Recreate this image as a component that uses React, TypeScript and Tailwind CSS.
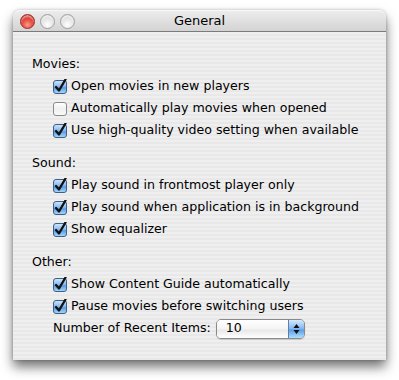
import React from 'react';

interface Option {
  label: string;
  checked: boolean;
}

const groups: { title: string; options: Option[] }[] = [
  {
    title: "Movies:",
    options: [
      { label: "Open movies in new players", checked: true },
      { label: "Automatically play movies when opened", checked: false },
      { label: "Use high-quality video setting when available", checked: true },
    ],
  },
  {
    title: "Sound:",
    options: [
      { label: "Play sound in frontmost player only", checked: true },
      { label: "Play sound when application is in background", checked: true },
      { label: "Show equalizer", checked: true },
    ],
  },
  {
    title: "Other:",
    options: [
      { label: "Show Content Guide automatically", checked: true },
      { label: "Pause movies before switching users", checked: true },
    ],
  },
];

function Light({ red }: { red?: boolean }) {
  return (
    <div
      className={
        red
          ? "w-[15px] h-[15px] rounded-full border border-[#9a2a20] bg-[radial-gradient(circle_at_50%_75%,#ff9a8e_0%,#e0392c_55%,#a81d14_100%)] shadow-[inset_0_2px_2px_rgba(255,255,255,0.55)]"
          : "w-[15px] h-[15px] rounded-full border border-[#a0a0a0] bg-[radial-gradient(circle_at_50%_75%,#ffffff_0%,#e2e2e2_55%,#b8b8b8_100%)] shadow-[inset_0_2px_2px_rgba(255,255,255,0.7)]"
      }
    />
  );
}

function Checkbox({ checked }: { checked: boolean }) {
  return (
    <svg width="15" height="15" viewBox="0 0 15 15" className="shrink-0">
      <defs>
        <linearGradient id="cbOn" x1="0" y1="0" x2="0" y2="1">
          <stop offset="0" stopColor="#d4e8fb" />
          <stop offset="0.5" stopColor="#7fb4ec" />
          <stop offset="0.55" stopColor="#5a9ae4" />
          <stop offset="1" stopColor="#a9dcfb" />
        </linearGradient>
        <linearGradient id="cbOff" x1="0" y1="0" x2="0" y2="1">
          <stop offset="0" stopColor="#ffffff" />
          <stop offset="0.5" stopColor="#f0f0f0" />
          <stop offset="1" stopColor="#fafafa" />
        </linearGradient>
      </defs>
      <rect
        x="0.5"
        y="1.5"
        width="13"
        height="13"
        rx="2.5"
        fill={checked ? "url(#cbOn)" : "url(#cbOff)"}
        stroke={checked ? "#3d5f8c" : "#8a8a8a"}
      />
      {checked && (
        <path d="M3 8 L6 11.5 L12.5 0.5" fill="none" stroke="#111" strokeWidth="2.3" strokeLinecap="round" strokeLinejoin="round" />
      )}
    </svg>
  );
}

function Popup() {
  return (
    <div className="flex h-[20px] w-[89px] rounded-[5px] border border-[#8a8a8a] overflow-hidden shadow-[0_1px_1px_rgba(0,0,0,0.15)]">
      <div className="flex-1 flex items-center pl-[9px] bg-[linear-gradient(#ffffff,#f4f4f4_50%,#e8e8e8_55%,#ffffff)]">10</div>
      <div className="w-[16px] flex items-center justify-center border-l border-[#5a7fb0] bg-[linear-gradient(#d6eafc,#7fb6ee_50%,#5c9ce6_55%,#aee0fc)]">
        <svg width="7" height="12" viewBox="0 0 7 12">
          <path d="M3.5 1 L6.5 5 L0.5 5 Z" fill="#111" />
          <path d="M3.5 11 L6.5 7 L0.5 7 Z" fill="#111" />
        </svg>
      </div>
    </div>
  );
}

export default function App() {
  return (
    <div className="w-[399px] h-[380px] bg-white pt-[10px] pl-[13px] font-['Lucida_Grande','DejaVu_Sans',sans-serif] text-[12.6px] text-black">
      <div className="w-[373px] h-[350px] rounded-t-[7px] overflow-hidden flex flex-col shadow-[0_7px_12px_rgba(0,0,0,0.55),0_0_3px_rgba(0,0,0,0.25)]">
        <div className="relative h-[22px] flex items-center px-[7px] gap-[5px] border-b border-[#7b7b7b] bg-[linear-gradient(#ececec,#d3d3d3)] rounded-t-[7px] border-t border-t-[#f8f8f8]">
          <Light red />
          <Light />
          <Light />
          <div className="absolute inset-0 flex items-center justify-center text-[13px]">General</div>
        </div>
        <div className="flex-1 pt-[21px] pl-[19px] bg-[repeating-linear-gradient(#efefef_0px,#efefef_2px,#e8e8e8_2px,#e8e8e8_4px)]">
          {groups.map((g, gi) => (
            <div key={g.title} className={gi > 0 ? "mt-[11px]" : ""}>
              <div className="h-[22px] flex items-center">{g.title}</div>
              {g.options.map((o) => (
                <div key={o.label} className="h-[22px] flex items-center pl-[21px] gap-[3px]">
                  <Checkbox checked={o.checked} />
                  <span>{o.label}</span>
                </div>
              ))}
            </div>
          ))}
          <div className="h-[23px] flex items-center pl-[21px] gap-[5px]">
            <span>Number of Recent Items:</span>
            <Popup />
          </div>
        </div>
      </div>
    </div>
  );
}
